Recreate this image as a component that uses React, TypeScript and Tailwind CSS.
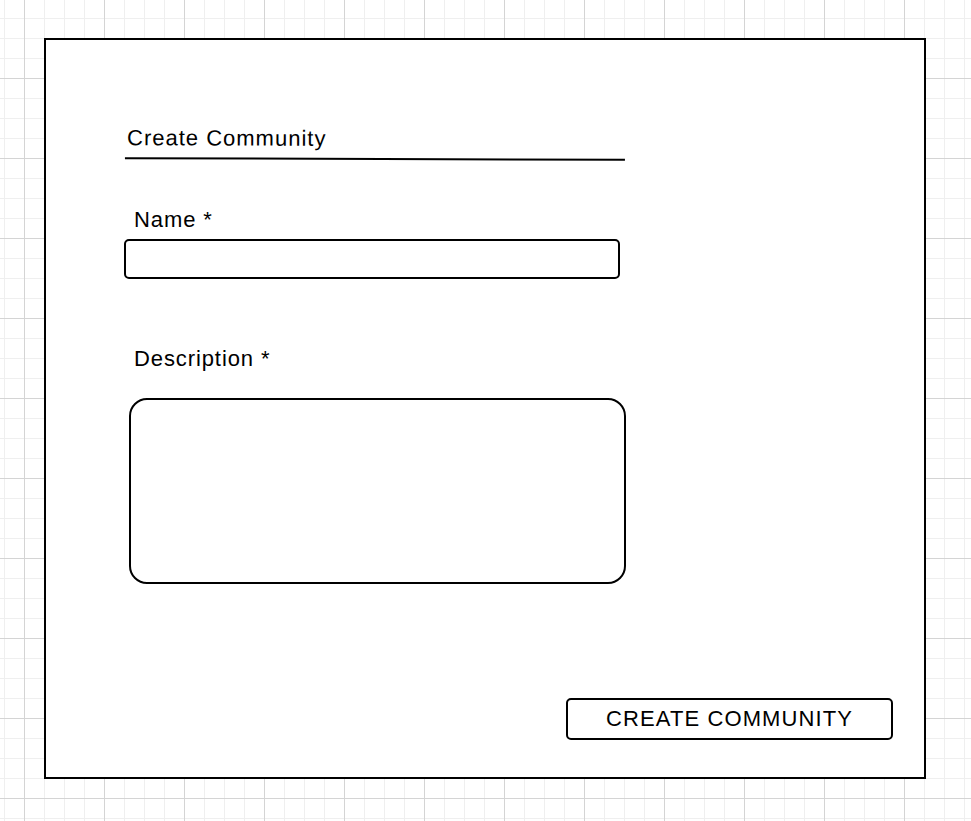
export default function App() {
  return (
    <div className="h-[821px] w-[971px] overflow-hidden bg-white bg-[linear-gradient(to_right,#d4d4d4_1px,transparent_1px),linear-gradient(to_bottom,#d4d4d4_1px,transparent_1px),linear-gradient(to_right,#efefef_1px,transparent_1px),linear-gradient(to_bottom,#efefef_1px,transparent_1px)] bg-[size:80px_80px,80px_80px,20px_20px,20px_20px] bg-[position:24px_78px,24px_78px,4px_18px,4px_18px] pl-[44px] pt-[38px] font-['Liberation_Sans',Arial,sans-serif] text-black">
      <div className="flex h-[741px] w-[882px] flex-col border-2 border-black bg-white">
        <div className="ml-[79px] mt-[86px] w-[500px] rotate-[0.2deg] border-b-2 border-black pb-[6px] pl-[2px] text-[22px] leading-[26px] tracking-[1px]">
          Create Community
        </div>

        <label className="ml-[88px] mt-[47px] text-[22px] leading-[26px] tracking-[0.9px]">Name *</label>
        <input className="ml-[78px] mt-[6px] h-[40px] w-[496px] rounded-[5px] border-2 border-black px-2 outline-none" />

        <label className="ml-[88px] mt-[67px] text-[22px] leading-[26px] tracking-[0.9px]">
          Description *
        </label>
        <textarea className="ml-[83px] mt-[26px] h-[186px] w-[497px] resize-none rounded-[18px] border-2 border-black p-3 outline-none" />

        <button className="mr-[31px] mt-[114px] flex h-[42px] w-[327px] items-center justify-center self-end rounded-[5px] border-2 border-black text-[22px] leading-[26px] tracking-[1.1px]">
          CREATE COMMUNITY
        </button>
      </div>
    </div>
  );
}
